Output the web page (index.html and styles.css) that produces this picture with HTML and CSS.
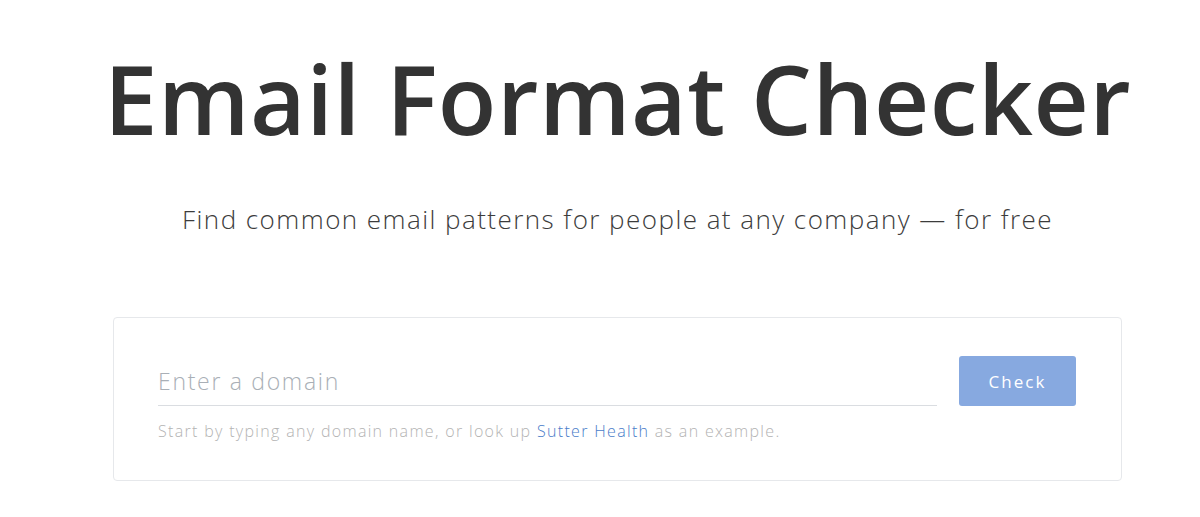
FILE: index.html
```html
<!DOCTYPE html>
<html lang="en">
<head>
<meta charset="utf-8">
<title>Email Format Checker</title>
<link rel="stylesheet" href="styles.css">
</head>
<body>
<main class="page">
  <h1 class="title">Email Format Checker</h1>
  <p class="subtitle">Find common email patterns for people at any company — for free</p>
  <section class="card">
    <div class="search-row">
      <div class="field">
        <input class="domain-input" type="text" placeholder="Enter a domain">
        <p class="hint">Start by typing any domain name, or look up <a class="hint-link" href="#">Sutter Health</a> as an example.</p>
      </div>
      <button class="check-btn" type="button">Check</button>
    </div>
  </section>
</main>
</body>
</html>
```
FILE: styles.css
```css
* { box-sizing: border-box; }
html, body { margin: 0; padding: 0; background: #ffffff; }
body {
  font-family: "Open Sans", "DejaVu Sans", sans-serif;
  color: #333333;
}
.page {
  width: 1009px;
  margin-left: 113px;
  display: flex;
  flex-direction: column;
  align-items: center;
}
.title {
  margin: 38px 0 0;
  font-size: 96px;
  font-weight: 560;
  line-height: 120px;
  color: #333333;
  white-space: nowrap;
  letter-spacing: 0.5px;
}
.subtitle {
  margin: 43px 0 0;
  font-size: 26px;
  font-weight: 300;
  line-height: 36px;
  color: #3c3c3c;
  white-space: nowrap;
  letter-spacing: 1.45px;
}
.card {
  align-self: stretch;
  margin-top: 80px;
  border: 1px solid #e6e8eb;
  border-radius: 4px;
  padding: 38px 45px 38px 44px;
}
.search-row {
  display: flex;
  align-items: flex-start;
  gap: 22px;
}
.field { flex: 1; }
.domain-input {
  display: block;
  width: 100%;
  border: none;
  border-bottom: 1px solid #dadde1;
  padding: 9px 0 8px;
  font-family: inherit;
  font-size: 23px;
  font-weight: 300;
  letter-spacing: 1.7px;
  color: #333;
  outline: none;
  background: transparent;
}
.domain-input::placeholder { color: #a9afb6; }
.hint {
  margin: 14px 0 0;
  font-size: 16px;
  font-weight: 300;
  color: #b3b3b3;
  white-space: nowrap;
  letter-spacing: 1.32px;
}
.hint-link { color: #4a7cc9; text-decoration: none; }
.check-btn {
  width: 117px;
  height: 50px;
  border: none;
  border-radius: 3px;
  background: #87a9e0;
  color: #ffffff;
  font-family: inherit;
  font-size: 17px;
  font-weight: 500;
  letter-spacing: 2px;
}
```
